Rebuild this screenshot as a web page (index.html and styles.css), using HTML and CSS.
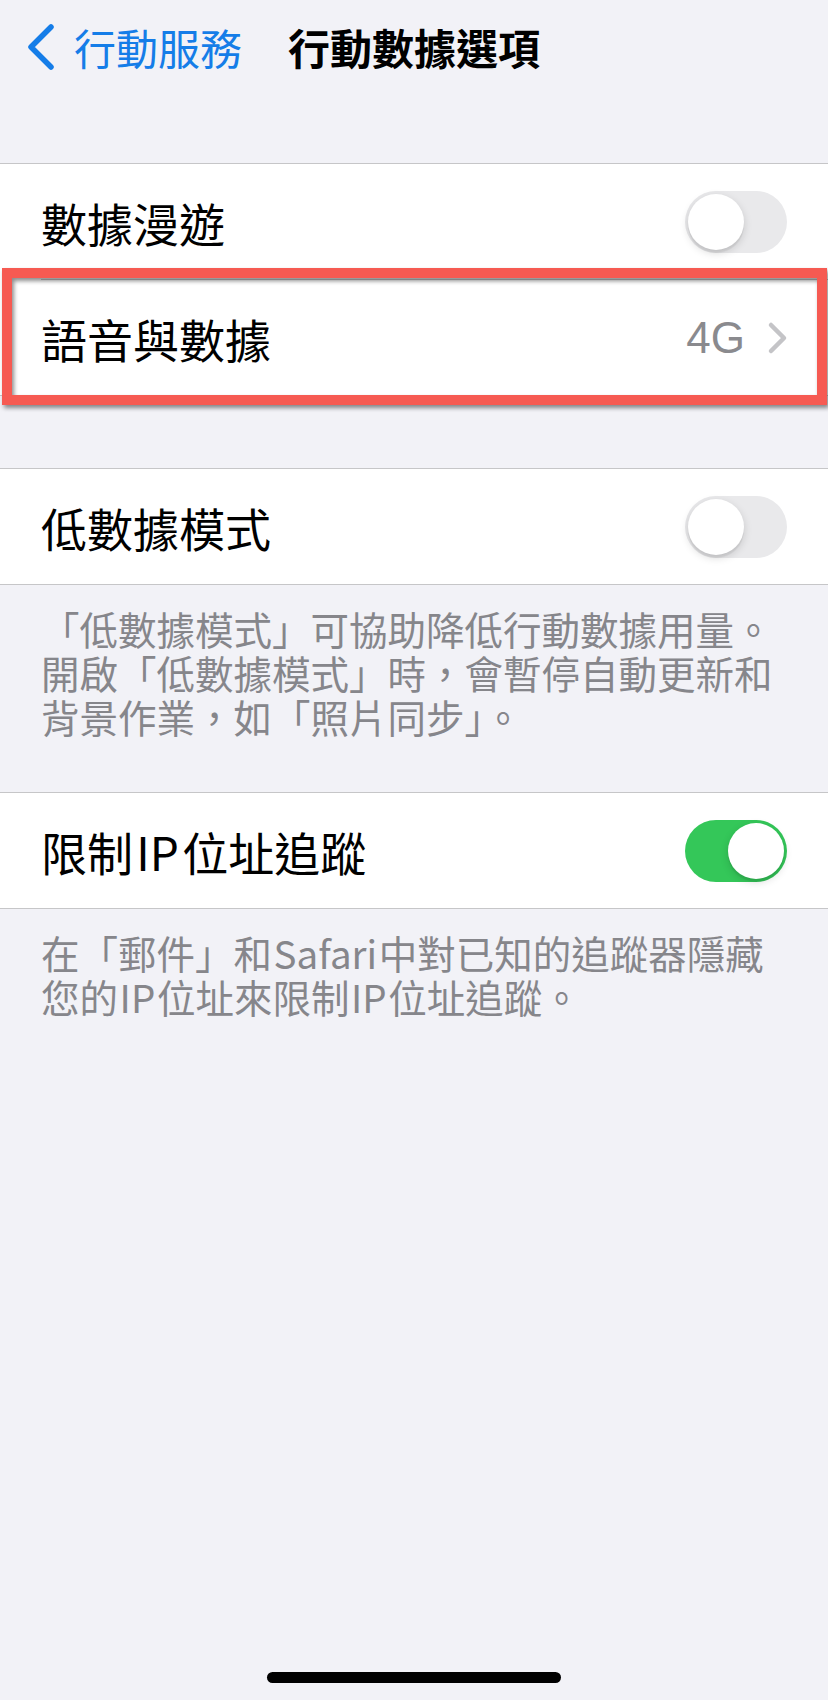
FILE: index.html
```
<!DOCTYPE html>
<html lang="zh-Hant">
<head>
    <meta charset="UTF-8">
    <meta name="viewport" content="width=device-width, initial-scale=1.0">
    <title>行動數據選項</title>
    <link rel="stylesheet" href="styles.css">
</head>
<body>
    <div class="screen">
        <header class="nav">
            <a class="back" href="#">
                <svg class="back-icon" width="32" height="48" viewBox="0 0 32 48">
                    <path d="M26 4 L6 24 L26 44" fill="none" stroke="#157de8" stroke-width="5.5" stroke-linecap="round" stroke-linejoin="round"/>
                </svg>
                <span>行動服務</span>
            </a>
            <h1 class="title">行動數據選項</h1>
            <span></span>
        </header>

        <main class="content">
            <section class="group group-first">
                <div class="row">
                    <div class="row-body">
                        <span class="label">數據漫遊</span>
                        <span class="switch"><span class="knob"></span></span>
                    </div>
                </div>
                <div class="row row-marked">
                    <div class="row-body">
                        <span class="label">語音與數據</span>
                        <span class="value">4G</span>
                        <svg class="disclosure" width="22" height="34" viewBox="0 0 22 34">
                            <path d="M4 4 L17 17 L4 30" fill="none" stroke="#c4c4c7" stroke-width="4.5" stroke-linecap="round" stroke-linejoin="round"/>
                        </svg>
                    </div>
                    <div class="highlight"></div>
                </div>
            </section>

            <section class="group group-gap">
                <div class="row">
                    <div class="row-body">
                        <span class="label">低數據模式</span>
                        <span class="switch"><span class="knob"></span></span>
                    </div>
                </div>
            </section>
            <p class="footer">「低數據模式」可協助降低行動數據用量。開啟「低數據模式」時，會暫停自動更新和背景作業，如「照片同步」。</p>

            <section class="group">
                <div class="row">
                    <div class="row-body">
                        <span class="label">限制 IP 位址追蹤</span>
                        <span class="switch on"><span class="knob"></span></span>
                    </div>
                </div>
            </section>
            <p class="footer">在「郵件」和 Safari 中對已知的追蹤器隱藏您的 IP 位址來限制 IP 位址追蹤。</p>
        </main>

        <div class="home-bar"></div>
    </div>
</body>
</html>
```

FILE: styles.css
```
body {
    margin: 0;
    background-color: #f2f2f7;
    font-family: "Noto Sans CJK TC", "Noto Sans", sans-serif;
    color: #000000;
}

.screen {
    min-height: 1700px;
    display: flex;
    flex-direction: column;
}

/* navigation bar */
.nav {
    height: 94px;
    display: grid;
    grid-template-columns: 1fr auto 1fr;
    align-items: center;
}

.back {
    display: flex;
    align-items: center;
    gap: 17px;
    padding-left: 25px;
    color: #157de8;
    text-decoration: none;
    font-size: 42px;
    line-height: 48px;
}

.back-icon {
    flex-shrink: 0;
}

.title {
    margin: 0;
    font-size: 42px;
    line-height: 48px;
    font-weight: 700;
}

/* grouped list */
.group {
    background-color: #ffffff;
    border-top: 1px solid #c6c6c8;
    border-bottom: 1px solid #c6c6c8;
}

.group-first {
    margin-top: 69px;
}

.group-gap {
    margin-top: 72px;
}

.row {
    position: relative;
    padding-left: 41px;
}

.row-body {
    display: flex;
    align-items: center;
    min-height: 115px;
    padding-right: 41px;
    border-bottom: 1px solid #c6c6c8;
}

.row:last-child .row-body {
    border-bottom: none;
}

.label {
    flex: 1;
    font-size: 46px;
    line-height: 56px;
    word-spacing: -7px;
}

.value {
    font-family: "Liberation Sans", Arial, sans-serif;
    font-size: 44px;
    line-height: 56px;
    color: #8a8a8e;
    margin-right: 22px;
}

.disclosure {
    margin-right: -2px;
}

/* toggle */
.switch {
    width: 102px;
    height: 62px;
    border-radius: 31px;
    background-color: #e9e9eb;
    display: flex;
    align-items: center;
    padding: 0 3px;
    box-sizing: border-box;
}

.knob {
    width: 56px;
    height: 56px;
    border-radius: 50%;
    background-color: #ffffff;
    box-shadow: 0 3px 8px rgba(0, 0, 0, 0.15), 0 3px 1px rgba(0, 0, 0, 0.06);
}

.switch.on {
    background-color: #34c759;
    justify-content: flex-end;
}

/* annotation box */
.highlight {
    position: absolute;
    top: -12px;
    bottom: -10px;
    left: 2px;
    right: 1px;
    border: 10px solid #f65a52;
    filter: drop-shadow(2px 3px 2px rgba(0, 0, 0, 0.45));
    pointer-events: none;
}

/* footers */
.footer {
    margin: 0;
    padding: 21px 41px 54px;
    font-size: 38.5px;
    line-height: 44px;
    color: #86868b;
    word-spacing: -7px;
}

.home-bar {
    width: 294px;
    height: 11px;
    border-radius: 6px;
    background-color: #000000;
    margin: auto auto 17px;
}
```
